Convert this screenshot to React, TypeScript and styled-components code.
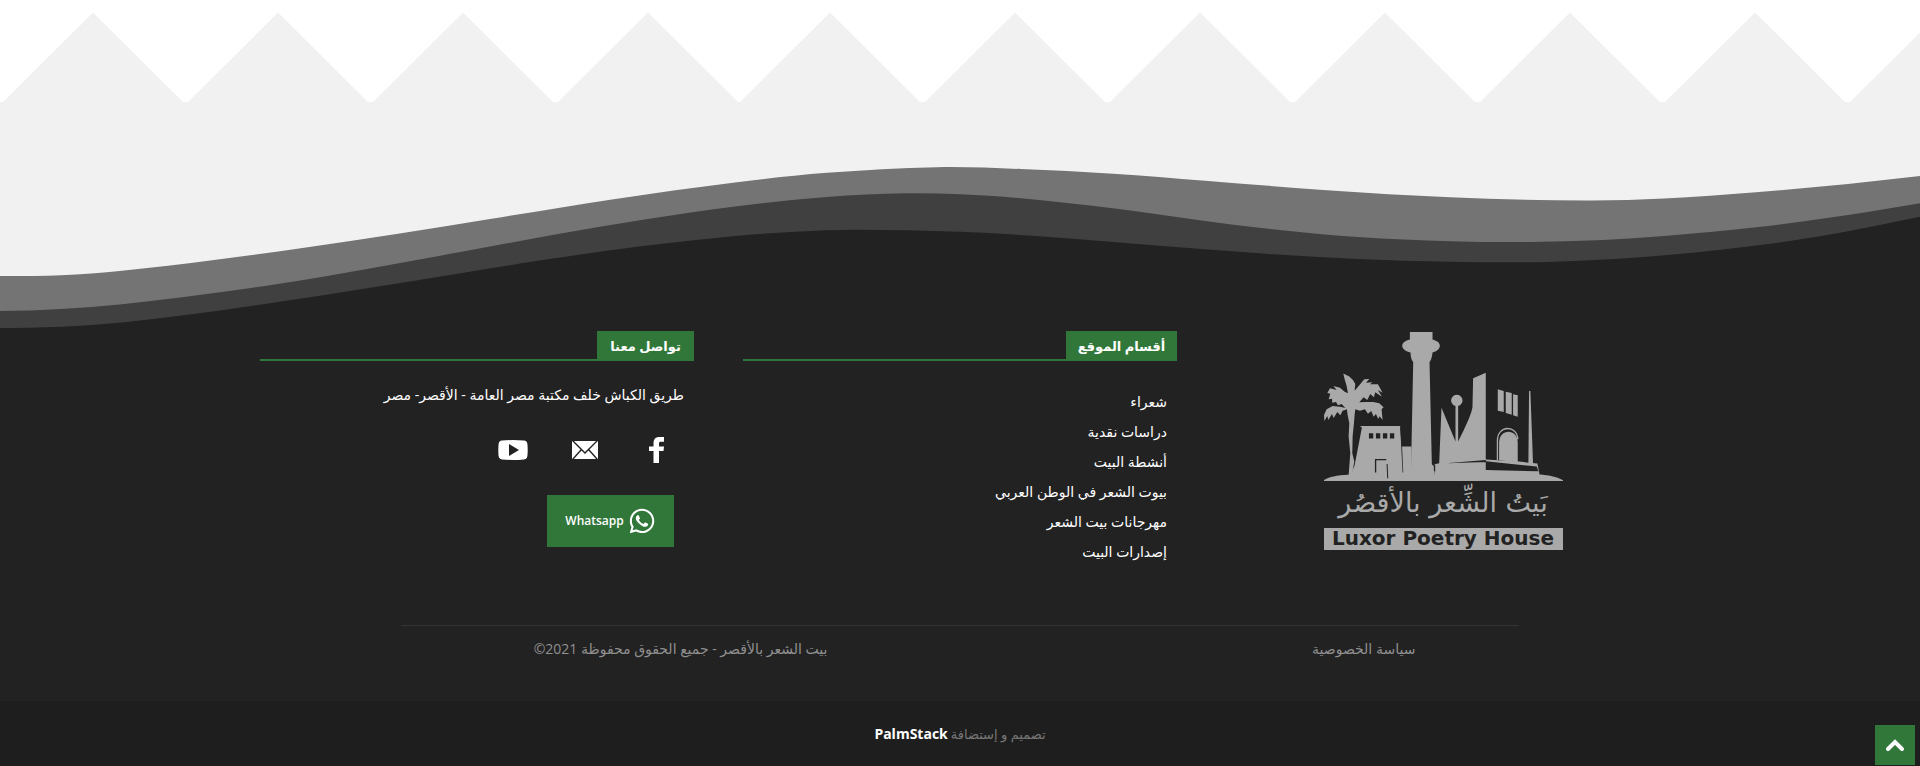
import React from 'react';
import styled, { createGlobalStyle } from 'styled-components';
import { FaWhatsapp } from 'react-icons/fa';

const green = '#31773a';
const dark = '#222222';
const silver = '#a9a9a9';
const arabic = '"Open Sans", "DejaVu Sans", sans-serif';

const GlobalStyle = createGlobalStyle`
  *, *::before, *::after { box-sizing: border-box; }
  html { background: #1e1e1e; }
  body { margin: 0; font-family: ${arabic}; font-size: 14px; line-height: 20px; }
  a { color: inherit; text-decoration: none; }
`;

const Page = styled.div`
  display: flex;
  flex-direction: column;
  background: ${dark};
`;

const Divider = styled.div`
  height: 331px;
  background: #f1f1f1;
`;

const Shape = styled.svg`
  display: block;
  width: 100%;
  height: 100%;
`;

const Footer = styled.footer`
  color: #fff;
`;

const Columns = styled.div`
  display: grid;
  grid-template-columns: repeat(3, 1fr);
  gap: 49px;
  width: 100%;
  max-width: 1400px;
  min-height: 294px;
  margin: 0 auto;
`;

const Column = styled.section`
  display: flex;
  flex-direction: column;
`;

const LogoColumn = styled(Column)`
  align-items: center;
`;

const Heading = styled.h2`
  display: flex;
  margin: 0;
  border-bottom: 2px solid ${green};
  font-size: 13px;
  line-height: 30px;
  font-weight: 700;
`;

const HeadingLabel = styled.span<{ $width: number }>`
  min-width: ${(p) => p.$width}px;
  height: 28px;
  background: ${green};
  text-align: center;
  white-space: nowrap;
`;

const LinkList = styled.ul`
  display: flex;
  flex-direction: column;
  margin: 26px 0 0;
  padding: 0 10px;
  list-style: none;
  line-height: 30px;
`;

const Address = styled.p`
  margin: 24px 0 0;
  padding: 0 10px;
`;

const SocialRow = styled.div`
  display: flex;
  gap: 33px;
  margin: 26px 18px 0;
`;

const SocialLink = styled.a`
  display: flex;
  align-items: center;
  justify-content: center;
  width: 39px;
  height: 38px;
`;

const WhatsappButton = styled.button`
  display: flex;
  align-items: center;
  justify-content: center;
  gap: 4px;
  width: 127px;
  height: 52px;
  margin: 26px 20px 0;
  padding: 0;
  border: 0;
  background: ${green};
  color: #fff;
  font: 600 12px/20px "Open Sans", sans-serif;
  cursor: pointer;
`;

const Legal = styled.div`
  display: grid;
  grid-template-columns: 5fr 4fr 9fr;
  width: calc(100% - 32px);
  max-width: 1118px;
  height: 76px;
  margin: 0 auto;
  padding-top: 13px;
  border-top: 1px solid #333;
  color: #909090;
  text-align: center;
`;

const Copyright = styled.span`
  grid-column: 3;
`;

const Credits = styled.div`
  display: flex;
  align-items: center;
  justify-content: center;
  gap: 3px;
  height: 65px;
  background: #1e1e1e;
  color: #777;
  font-size: 13px;
`;

const Brand = styled.a`
  color: #fff;
  font-size: 14px;
  font-weight: 700;
`;

const TopButton = styled.button`
  position: fixed;
  right: 5px;
  bottom: 1px;
  display: flex;
  align-items: center;
  justify-content: center;
  width: 40px;
  height: 40px;
  padding: 0;
  border: 0;
  background: ${green};
  cursor: pointer;
`;

const LogoBox = styled.a`
  display: flex;
  flex-direction: column;
  width: 239px;
  margin-top: 1px;
  color: ${silver};
`;

const LogoName = styled.span`
  height: 47px;
  font-family: "DejaVu Sans", sans-serif;
  font-size: 27px;
  line-height: 44px;
  text-align: center;
  white-space: nowrap;
`;

const LogoCaption = styled.span`
  height: 22px;
  background: ${silver};
  color: ${dark};
  font-family: "DejaVu Sans", sans-serif;
  font-size: 20px;
  font-weight: 700;
  line-height: 21px;
  text-align: center;
  white-space: nowrap;
`;

type Point = [number, number];

const waves: { fill: string; points: Point[] }[] = [
  {
    fill: '#747474',
    points: [[0, 276], [61, 275.2], [122, 270.8], [214, 260], [306, 247.6], [398, 233.8], [490, 219], [612, 199.4], [735, 182.5], [827, 172.8], [937, 167.2], [1021, 169], [1113, 173.8], [1205, 180.8], [1327, 190.2], [1450, 197.2], [1585, 200.6], [1664, 198.6], [1756, 192.3], [1848, 184], [1920, 176]],
  },
  {
    fill: '#404040',
    points: [[0, 311], [61, 309], [122, 304.2], [184, 297], [276, 284.3], [367, 269], [459, 252.3], [551, 235.3], [643, 219.8], [735, 206.4], [827, 197], [906, 193.3], [960, 194.3], [1021, 198.2], [1113, 208.3], [1205, 221], [1266, 228.5], [1358, 237], [1450, 241.2], [1530, 242], [1603, 240], [1664, 236], [1756, 227.3], [1848, 215], [1920, 203.3]],
  },
  {
    fill: dark,
    points: [[0, 328], [61, 326.8], [122, 322.4], [184, 315.3], [276, 302.3], [367, 288.2], [459, 273.4], [551, 258.8], [643, 246], [735, 236], [796, 231.8], [857, 229.8], [960, 231.8], [1021, 235], [1113, 242], [1205, 249.3], [1266, 253.8], [1358, 259], [1450, 261.8], [1511, 262.3], [1554, 261.7], [1634, 257.7], [1725, 249.2], [1817, 236.8], [1920, 216.7]],
  },
];

// Smooth curve through the points, level at the left end and closed along the bottom.
function wavePath(points: Point[]) {
  let d = `M${points[0][0]},${points[0][1]}`;
  for (let i = 0; i < points.length - 1; i++) {
    const a = points[Math.max(i - 1, 0)];
    const b = points[i];
    const c = points[i + 1];
    const e = points[Math.min(i + 2, points.length - 1)];
    const span = (c[0] - b[0]) / 3;
    const s1 = i === 0 ? 0 : (c[1] - a[1]) / (c[0] - a[0]);
    const s2 = (e[1] - b[1]) / (e[0] - b[0]);
    d += `C${b[0] + span},${b[1] + span * s1} ${c[0] - span},${c[1] - span * s2} ${c[0]},${c[1]}`;
  }
  return `${d}V331H0Z`;
}

function zigzagPath() {
  let d = 'M0,0V102';
  for (let i = 0; i < 11; i++) {
    const x = i * 185 - (i > 3 ? 3 : 0);
    d += `L${x + 3},102L${x + 93},12.5L${x + 183},102`;
  }
  return `${d}V0Z`;
}

const FooterShape = () => (
  <Divider>
    <Shape viewBox="0 0 1920 331" preserveAspectRatio="none" aria-hidden="true">
      <path d={zigzagPath()} fill="#fff" />
      {waves.map((w) => (
        <path key={w.fill} d={wavePath(w.points)} fill={w.fill} />
      ))}
    </Shape>
  </Divider>
);

const Skyline = () => (
  <svg viewBox="42 36 718 447" width="239" height="149" fill={silver} aria-hidden="true">
    {/* ground */}
    <path d="M42,480C65,468 95,465 125,464H690C715,466 740,470 760,481V483H42Z" />
    {/* palm */}
    <path d="M100,160L118,169L129,180L136,192L134,212L148,196L163,178L178,177L168,188L188,187L180,193L204,193L218,218L204,210L216,230L196,217L192,232L181,222L172,240L161,232L148,247L168,246L190,246L208,250L221,262L215,268L218,300L209,289L205,297L198,282L191,290L184,273L174,281L165,268L150,272L136,268L134,285L132,310L128,350L127,400L133,425L126,466H116L121,400L116,350L118,310L113,285L111,268L98,272L91,286L82,276L71,294L66,282L55,300L52,288L43,303L42,285L50,268L68,258L90,260L106,264L95,252L84,256L78,246L67,248L66,236L56,238L61,221L52,219L60,205L80,210L70,198L90,203L104,215L114,220L110,198L104,178Z" />
    {/* temple gate */}
    <path d="M152,318H271V322L275,380H305V466H122L134,436L156,322H152Z" />
    <path d="M177,340h13v16h-13zM198,340h13v16h-13zM219,340h13v16h-13zM240,340h13v16h-13z" fill={dark} />
    <path d="M195,458V417H229V421H199V458ZM230,432H233L235,475H232ZM271,322L274,322L280,458L278,458Z" fill={dark} />
    {/* minaret */}
    <path d="M300,36H368V58C382,62 390,68 390,77C390,87 380,94 368,97C367,108 364,120 359,126L366,434L374,440V470H303L310,126C304,119 302,108 302,97C288,94 277,87 277,77C277,68 286,61 300,58Z" />
    {/* sail shaped building */}
    <path d="M374,470V433L388,430L395,263L437,365V258A17,17 0 1 1 445,258V365L462,330C474,305 485,280 488,262L490,175L528,158V466H690L683,431L628,425L528,419V470Z" />
    <path d="M410,430L528,420V426ZM528,424L681,440L686,454L528,450ZM372,436L376,434V456L372,452Z" fill={dark} />
    <path d="M564,208L582,213V276L564,272ZM588,215L606,219V284L588,279ZM610,223L624,226V290L610,286Z" />
    <path d="M568,421V368C568,324 624,324 624,368V427Z" />
    <path d="M563,420V362C563,314 622,314 624,358" fill="none" stroke={silver} strokeWidth="4" />
    <path d="M658,213H662L670,432H656Z" />
  </svg>
);

const Logo = () => (
  <LogoBox href="#home" aria-label="Luxor Poetry House">
    <Skyline />
    <LogoName>بَيتُ الشِّعر بالأقصُر</LogoName>
    <LogoCaption dir="ltr">Luxor Poetry House</LogoCaption>
  </LogoBox>
);

const FacebookIcon = () => (
  <svg width="15" height="26" viewBox="0 0 15 26" fill="#fff" aria-hidden="true">
    <path d="M4.5,26V14H0V9.4H4.5V6.5C4.5,2 6.6,0 10.5,0H15V4.8H12C10.4,4.8 10,5.4 10,6.8V9.4H15L14.5,14H10V26Z" />
  </svg>
);

const MailIcon = () => (
  <svg width="26" height="18" viewBox="0 0 26 18" aria-hidden="true">
    <rect width="26" height="18" rx="1" fill="#fff" />
    <path d="M1,0L13,12L25,0M1,18L9,9M25,18L17,9" fill="none" stroke={dark} strokeWidth="1.4" />
  </svg>
);

const YoutubeIcon = () => (
  <svg width="30" height="20" viewBox="0 0 30 20" aria-hidden="true">
    <path d="M4,.6Q15,-.5 26,.6Q29,1 29.4,4Q30,10 29.4,16Q29,19 26,19.4Q15,20.5 4,19.4Q1,19 .6,16Q0,10 .6,4Q1,1 4,.6Z" fill="#fff" />
    <path d="M11,4L21,10L11,16Z" fill={dark} />
  </svg>
);

const sections = [
  'شعراء',
  'دراسات نقدية',
  'أنشطة البيت',
  'بيوت الشعر في الوطن العربي',
  'مهرجانات بيت الشعر',
  'إصدارات البيت',
];

export default function App() {
  return (
    <Page dir="rtl" lang="ar">
      <GlobalStyle />
      <FooterShape />
      <Footer>
        <Columns>
          <LogoColumn>
            <Logo />
          </LogoColumn>
          <Column>
            <Heading>
              <HeadingLabel $width={111}>أقسام الموقع</HeadingLabel>
            </Heading>
            <LinkList>
              {sections.map((s) => (
                <li key={s}>
                  <a href="#section">{s}</a>
                </li>
              ))}
            </LinkList>
          </Column>
          <Column>
            <Heading>
              <HeadingLabel $width={97}>تواصل معنا</HeadingLabel>
            </Heading>
            <Address>طريق الكباش خلف مكتبة مصر العامة - الأقصر- مصر</Address>
            <SocialRow>
              <SocialLink href="#facebook" aria-label="Facebook">
                <FacebookIcon />
              </SocialLink>
              <SocialLink href="#mail" aria-label="Email">
                <MailIcon />
              </SocialLink>
              <SocialLink href="#youtube" aria-label="YouTube">
                <YoutubeIcon />
              </SocialLink>
            </SocialRow>
            <WhatsappButton type="button">
              <FaWhatsapp size={28} />
              Whatsapp
            </WhatsappButton>
          </Column>
        </Columns>
        <Legal>
          <a href="#privacy">سياسة الخصوصية</a>
          <Copyright>بيت الشعر بالأقصر - جميع الحقوق محفوظة 2021©</Copyright>
        </Legal>
        <Credits>
          <span>تصميم و إستضافة</span>
          <Brand href="#palmstack">PalmStack</Brand>
        </Credits>
      </Footer>
      <TopButton type="button" aria-label="أعلى">
        <svg width="20" height="14" viewBox="0 0 20 14" aria-hidden="true">
          <path d="M3,11L10,4L17,11" fill="none" stroke="#fff" strokeWidth="4" strokeLinecap="round" />
        </svg>
      </TopButton>
    </Page>
  );
}
